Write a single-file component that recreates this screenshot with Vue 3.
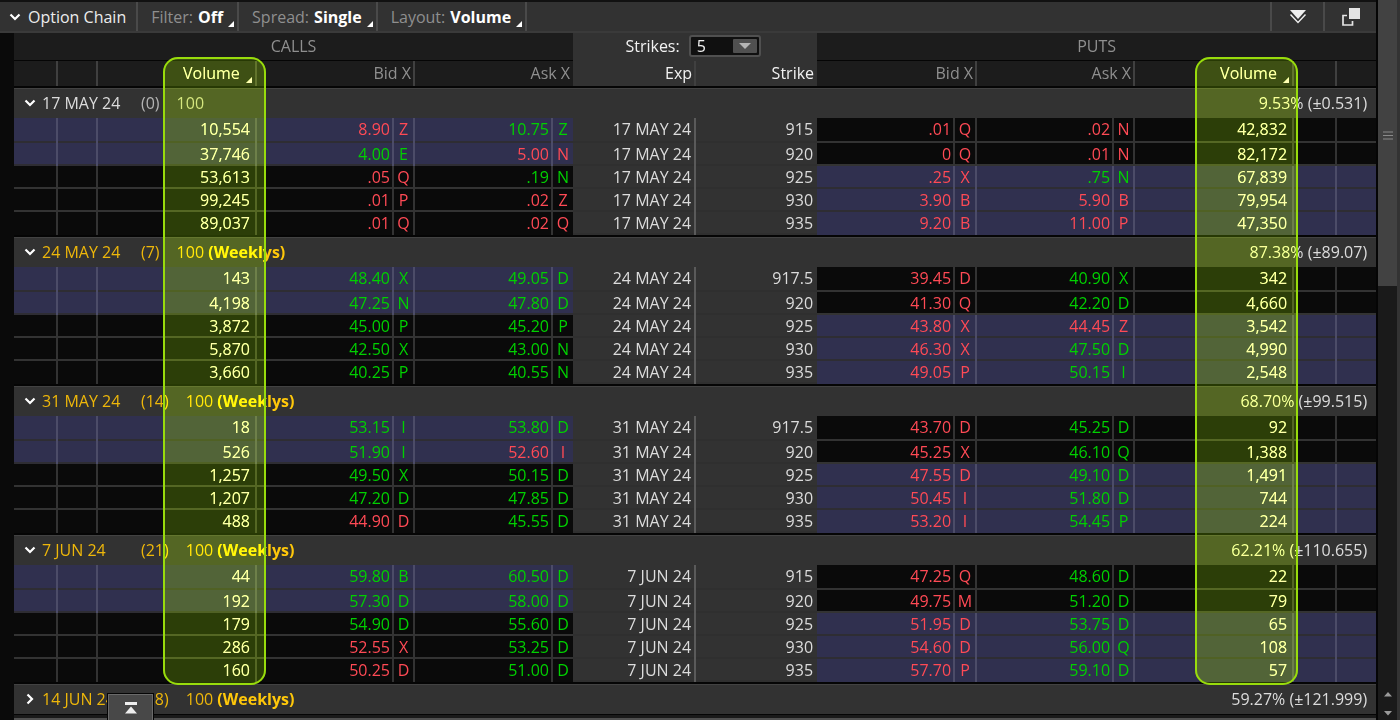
<script setup>
import { ref } from 'vue'

const strikes = ref('5')
const menus = [
  { label: 'Filter:', value: 'Off' },
  { label: 'Spread:', value: 'Single' },
  { label: 'Layout:', value: 'Volume' },
]

const columns = [44, 40, 159, 137, 21, 138, 20, 123, 121, 138, 22, 137, 21, 159, 43, 39]

// row: call volume, bid, exch, ask, exch, strike, put bid, exch, ask, exch, put volume
const parse = (text) => text.trim().split('\n').map((line) => line.trim().split(/\s+/))

// moves: one letter per quote (call bid, call ask, put bid, put ask): u = up, d = down
const groups = [
  {
    date: '17 MAY 24', days: 0, weekly: false, iv: '9.53% (±0.531)', open: true,
    moves: ['dudd', 'uddd', 'dudu', 'dddd', 'dddd'],
    rows: parse(`10,554 8.90 Z 10.75 Z 915 .01 Q .02 N 42,832
      37,746 4.00 E 5.00 N 920 0 Q .01 N 82,172
      53,613 .05 Q .19 N 925 .25 X .75 N 67,839
      99,245 .01 P .02 Z 930 3.90 B 5.90 B 79,954
      89,037 .01 Q .02 Q 935 9.20 B 11.00 P 47,350`),
  },
  {
    date: '24 MAY 24', days: 7, weekly: true, iv: '87.38% (±89.07)', open: true,
    moves: ['uudu', 'uudu', 'uudd', 'uudu', 'uudu'],
    rows: parse(`143 48.40 X 49.05 D 917.5 39.45 D 40.90 X 342
      4,198 47.25 N 47.80 D 920 41.30 Q 42.20 D 4,660
      3,872 45.00 P 45.20 P 925 43.80 X 44.45 Z 3,542
      5,870 42.50 X 43.00 N 930 46.30 X 47.50 D 4,990
      3,660 40.25 P 40.55 N 935 49.05 P 50.15 I 2,548`),
  },
  {
    date: '31 MAY 24', days: 14, weekly: true, iv: '68.70% (±99.515)', open: true,
    moves: ['uudu', 'uddu', 'uudu', 'uudu', 'dudu'],
    rows: parse(`18 53.15 I 53.80 D 917.5 43.70 D 45.25 D 92
      526 51.90 I 52.60 I 920 45.25 X 46.10 Q 1,388
      1,257 49.50 X 50.15 D 925 47.55 D 49.10 D 1,491
      1,207 47.20 D 47.85 D 930 50.45 I 51.80 D 744
      488 44.90 D 45.55 D 935 53.20 I 54.45 P 224`),
  },
  {
    date: '7 JUN 24', days: 21, weekly: true, iv: '62.21% (±110.655)', open: true,
    moves: ['uudu', 'uudu', 'uudu', 'dudu', 'dudu'],
    rows: parse(`44 59.80 B 60.50 D 915 47.25 Q 48.60 D 22
      192 57.30 D 58.00 D 920 49.75 M 51.20 D 79
      179 54.90 D 55.60 D 925 51.95 D 53.75 D 65
      286 52.55 X 53.25 D 930 54.60 D 56.00 Q 108
      160 50.25 D 51.00 D 935 57.70 P 59.10 D 57`),
  },
  { date: '14 JUN 24', days: 28, weekly: true, iv: '59.27% (±121.999)', open: false, moves: [], rows: [] },
]
</script>

<template>
  <div class="app">
    <main class="panel">
      <header class="toolbar">
        <button class="title" type="button">
          <svg width="12" height="8" viewBox="0 0 12 8"><path d="M1.5 1.5 6 6l4.500-4.500" fill="none" stroke="#fff" stroke-width="2.200" /></svg>
          Option Chain
        </button>
        <button v-for="m in menus" :key="m.label" class="menu" type="button">
          {{ m.label }} <b>{{ m.value }}</b>
          <svg class="corner" width="6" height="6" viewBox="0 0 6 6"><path d="M6 0v6H0z" fill="#fff" /></svg>
        </button>
        <span class="spacer"></span>
        <button class="tool" type="button" aria-label="Collapse">
          <svg width="18" height="16" viewBox="0 0 18 16"><path d="M1 1h16L9 10z" fill="#eee" /><path d="M1.500 4.500 9 13l7.500-8.500" fill="none" stroke="#222" stroke-width="1.500" /><path d="M1.500 5.500 9 13.500l7.500-8" fill="none" stroke="#eee" stroke-width="1.500" /></svg>
        </button>
        <button class="tool" type="button" aria-label="Detach">
          <svg width="20" height="20" viewBox="0 0 20 20"><path d="M6 8.500H2V18h9.500v-4" fill="none" stroke="#e4e4e4" stroke-width="1.700" /><path d="M8 1h11v11H8z" fill="#e4e4e4" /></svg>
        </button>
      </header>

      <div class="chain">
        <table>
          <colgroup><col v-for="(w, i) in columns" :key="i" :style="{ width: w + 'px' }" /></colgroup>
          <thead>
            <tr class="sides">
              <th colspan="7">CALLS</th>
              <th colspan="2" class="mid">
                <div class="strikes">
                  <label for="strikes">Strikes:</label>
                  <span class="pick">
                    <select id="strikes" v-model="strikes"><option>5</option><option>10</option></select>
                    <svg width="24" height="14" viewBox="0 0 24 14"><rect width="24" height="14" rx="1" fill="#505050" /><path d="M6 4h12l-6 6z" fill="#b4b4b4" /></svg>
                  </span>
                </div>
              </th>
              <th colspan="7">PUTS</th>
            </tr>
            <tr class="names">
              <th class="v"></th>
              <th class="v"></th>
              <th class="v vol">Volume <svg width="6" height="6" viewBox="0 0 6 6"><path d="M6 0v6H0z" fill="#fff" /></svg></th>
              <th class="v" colspan="2">Bid X</th>
              <th colspan="2">Ask X</th>
              <th class="v mid">Exp</th>
              <th class="mid last">Strike</th>
              <th class="v" colspan="2">Bid X</th>
              <th class="v" colspan="2">Ask X</th>
              <th class="v vol">Volume <svg width="6" height="6" viewBox="0 0 6 6"><path d="M6 0v6H0z" fill="#fff" /></svg></th>
              <th class="v"></th>
              <th></th>
            </tr>
          </thead>
          <tbody v-for="g in groups" :key="g.date">
            <tr class="group" :class="{ weekly: g.weekly }">
              <th colspan="16">
                <div class="bar">
                  <button type="button" class="toggle" :aria-label="g.date">
                    <svg width="12" height="12" viewBox="0 0 12 12">
                      <path :d="g.open ? 'M1.500 3.500 6 8l4.500-4.500' : 'M3.500 1.500 8 6l-4.500 4.500'" fill="none" stroke="#fff" stroke-width="2.200" />
                    </svg>
                  </button>
                  <span class="date">{{ g.date }}</span>
                  <span class="days">({{ g.days }})</span>
                  <span class="size">100 <b v-if="g.weekly">(Weeklys)</b></span>
                  <span class="iv">{{ g.iv }}</span>
                </div>
              </th>
            </tr>
            <tr v-for="(r, i) in g.rows" :key="i" class="row" :class="i < 2 ? 'call-itm' : 'put-itm'">
              <td class="call v"></td>
              <td class="call v"></td>
              <td class="call v vol">{{ r[0] }}</td>
              <td class="call x" :class="g.moves[i][0]">{{ r[1] }}</td>
              <td class="call v ex" :class="g.moves[i][0]">{{ r[2] }}</td>
              <td class="call x" :class="g.moves[i][1]">{{ r[3] }}</td>
              <td class="call ex" :class="g.moves[i][1]">{{ r[4] }}</td>
              <td class="mid v">{{ g.date }}</td>
              <td class="mid strike">{{ r[5] }}</td>
              <td class="put x" :class="g.moves[i][2]">{{ r[6] }}</td>
              <td class="put v ex" :class="g.moves[i][2]">{{ r[7] }}</td>
              <td class="put x" :class="g.moves[i][3]">{{ r[8] }}</td>
              <td class="put v ex" :class="g.moves[i][3]">{{ r[9] }}</td>
              <td class="put v vol">{{ r[10] }}</td>
              <td class="put v"></td>
              <td class="put"></td>
            </tr>
          </tbody>
        </table>
        <template v-for="side in ['calls', 'puts']" :key="side">
          <div class="mark tint" :class="side"></div>
          <div class="mark glow" :class="side"></div>
          <div class="mark edge" :class="side"></div>
        </template>
      </div>
      <footer class="foot"></footer>
      <button class="top" type="button" aria-label="Back to top">
        <svg width="14" height="14" viewBox="0 0 14 14"><path d="M1 1h12v3H1zM7 5.500l6 7H1z" fill="#eee" /></svg>
      </button>
    </main>

    <aside class="scroll">
      <div class="thumb">
        <svg width="10" height="9" viewBox="0 0 10 9"><path d="M0 1h10M0 4.500h10M0 8h10" stroke="#8a8a8a" stroke-width="1.200" /></svg>
      </div>
      <svg class="arrows" width="10" height="26" viewBox="0 0 10 26"><path d="M1 5.500h8l-4-4.500zM1 20h8l-4 4.500z" fill="#9a9a9a" /></svg>
    </aside>
  </div>
</template>

<style>
body { background: #0a0a0a; }
</style>

<style scoped>
.app {
  display: flex;
  height: 100vh;
  overflow: hidden;
  background: #0a0a0a;
  color: #dcdcdc;
  font: 16px/22px "Open Sans", "Noto Sans", sans-serif;
}
button, select { font: inherit; color: inherit; border: 0; padding: 0; background: none; }
.panel { flex: 1; min-width: 0; position: relative; display: flex; flex-direction: column; }

.toolbar {
  display: flex;
  height: 29px;
  flex: none;
  border-top: 2px solid #111;
  border-bottom: 2px solid #3a3a3a;
  background: #323232;
}
.toolbar button { display: flex; align-items: center; border-right: 2px solid #4a4a4a; box-sizing: border-box; }
.toolbar .title { gap: 7px; padding: 0 10px 0 9px; color: #ececec; }
.toolbar .menu { position: relative; gap: 5px; padding: 0 14px 0 13px; color: #8f8f8f; }
.menu b { color: #fff; }
.corner { position: absolute; right: 3px; bottom: 4px; }
.spacer { flex: 1; }
.toolbar .tool { width: 53px; justify-content: center; border-right: 0; border-left: 2px solid #4a4a4a; }

.chain { position: relative; flex: none; margin-left: 14px; isolation: isolate; }
table { width: 100%; table-layout: fixed; border-spacing: 0; }
th, td { padding: 0; font-weight: 400; white-space: nowrap; text-align: right; }

thead th { background-color: #1c1c1c; color: #8f8f8f; vertical-align: top; }
thead th.mid { background-color: #323232; color: #f2f2f2; }
.sides th { height: 27px; line-height: 26px; text-align: center; border-bottom: 1px solid #050505; }
.sides th.mid { border-bottom-color: #323232; }
.strikes { display: flex; justify-content: center; align-items: center; gap: 9px; height: 25px; padding-right: 4px; }
.pick { position: relative; display: flex; }
.pick select {
  appearance: none;
  width: 72px;
  height: 22px;
  box-sizing: border-box;
  padding: 0 6px;
  line-height: 18px;
  color: #f2f2f2;
  background: #101010;
  border: 2px solid #505050;
  border-radius: 3px;
}
.pick svg { position: absolute; right: 4px; top: 4px; pointer-events: none; }
.names th { height: 25px; line-height: 25px; padding-right: 3px; }
.names th.vol { color: #f2f2f2; padding-right: 5px; }
.names .vol svg { margin-left: 2px; vertical-align: -4px; }
.names .v { padding-right: 4px; background-image: linear-gradient(#404040, #404040); background-size: 2px 100%; background-position: right; background-repeat: no-repeat; }

.group th { border-top: 2px solid #050505; }
.bar {
  display: flex;
  align-items: center;
  height: 30px;
  box-sizing: border-box;
  padding: 0 9px 2px 10px;
  border-top: 1px solid #424242;
  background: #323232;
}
.toggle { display: flex; width: 18px; }
.date { width: 99px; text-align: left; }
.days { margin-right: 17px; color: #b4b4b4; }
.size { color: #b4b4b4; }
.iv { margin-left: auto; }
.weekly .date, .weekly .days, .weekly .size { color: #eeb70a; }
.weekly b { color: #ffc80a; }

.row td {
  --cell: #0a0a0a;
  --rule: #333;
  --line: #333;
  height: 23px;
  line-height: 23px;
  box-sizing: border-box;
  background:
    linear-gradient(var(--line), var(--line)) right / 0 100% no-repeat,
    linear-gradient(var(--rule), var(--rule)) bottom / 100% 2px no-repeat var(--cell);
}
.group + .row td { height: 25px; padding-bottom: 2px; }
.row:last-child td { --rule: var(--cell); }
.call-itm .call, .put-itm .put { --cell: #30304f; --rule: #2e2d33; --line: #4c4c68; }
.row td.mid { --cell: #323232; --rule: #2f2f2f; --line: #5a5a5a; padding-right: 5px; }
.row td.v { background-size: 2px 100%, 100% 2px; }
.row td.x { padding-right: 4px; box-shadow: inset -2px 0 var(--line); }
.row td.ex { text-align: center; }
.row td.v.ex { padding-right: 2px; }
.row td.vol { padding-right: 7px; color: #f2f2f2; }
.row td.mid.strike { padding-right: 4px; }
.u { color: #00d000; }
.d { color: #ff4a55; }

.mark { position: absolute; top: 24px; bottom: 29px; width: 103px; box-sizing: border-box; border-radius: 15px; pointer-events: none; }
.calls { left: calc(11% - 1px); }
.puts { right: calc(5.800% - 1px); }
.tint { background: #ffffb4; mix-blend-mode: multiply; }
.glow { background: #223400; mix-blend-mode: plus-lighter; }
.edge { border: 2px solid #98dc0c; }

.foot { flex: 1; margin-left: 14px; border-top: 1px solid #050505; background: #1a1a1a; border-bottom: 2px solid #505050; }
.top {
  position: absolute;
  left: 108px;
  bottom: 0;
  width: 45px;
  height: 26px;
  display: flex;
  align-items: center;
  justify-content: center;
  background: #484848;
  border: solid #6a6a6a;
  border-width: 1px 1px 0;
  box-shadow: 0 0 0 1px #050505;
}

.scroll { position: relative; width: 24px; flex: none; box-sizing: border-box; border-left: 2px solid #050505; border-right: 3px solid #333; background: #1a1a1a; }
.thumb { height: 286px; background: #424242; box-sizing: border-box; padding-top: 131px; text-align: center; line-height: 0; }
.arrows { position: absolute; bottom: 3px; left: 5px; }
</style>
